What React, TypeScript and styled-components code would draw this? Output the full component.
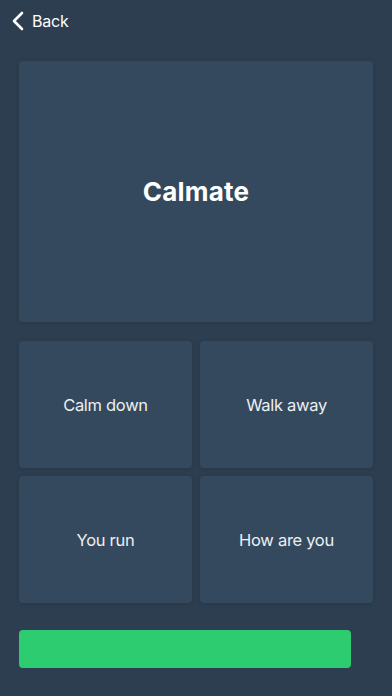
import React from 'react';
import styled, { createGlobalStyle } from 'styled-components';

const GlobalStyle = createGlobalStyle`
  html, body {
    margin: 0;
    padding: 0;
    background: #2c3e50;
  }
  body {
    font-family: Inter, "Noto Sans", "Liberation Sans", sans-serif;
    -webkit-font-smoothing: antialiased;
  }
`;

const Screen = styled.div`
  width: 392px;
  height: 696px;
  background: #2c3e50;
  display: flex;
  flex-direction: column;
  overflow: hidden;
`;

const NavBar = styled.div`
  height: 44px;
  display: flex;
  align-items: center;
  padding: 0 12px;
  box-sizing: border-box;
`;

const BackButton = styled.button`
  display: flex;
  align-items: center;
  gap: 8px;
  background: none;
  border: none;
  padding: 0;
  color: #ffffff;
  font-family: inherit;
  font-size: 16px;
  letter-spacing: -0.2px;
  cursor: pointer;
  margin-top: -2px;
`;

const Content = styled.div`
  display: flex;
  flex-direction: column;
  padding: 17px 19px 0;
`;

const Card = styled.div<{ $height: number }>`
  height: ${(p) => p.$height}px;
  background: #34495e;
  border-radius: 4px;
  box-shadow: 0 1px 4px rgba(0, 0, 0, 0.12);
  display: flex;
  align-items: center;
  justify-content: center;
  color: #ffffff;
`;

const Title = styled.span`
  font-size: 26px;
  font-weight: 700;
  letter-spacing: 0.2px;
`;

const Answers = styled.div`
  margin-top: 19px;
  display: grid;
  grid-template-columns: 1fr 1fr;
  gap: 8px;
`;

const AnswerText = styled.span`
  font-size: 16.5px;
  font-weight: 400;
  letter-spacing: -0.3px;
  color: #ecf0f1;
`;

const Track = styled.div`
  margin-top: 27px;
  height: 38px;
  display: flex;
`;

const Progress = styled.div`
  height: 100%;
  background: #2ecc71;
  border-radius: 4px;
`;

const answers = ['Calm down', 'Walk away', 'You run', 'How are you'];

const ChevronLeft = () => (
  <svg width="12" height="20" viewBox="0 0 12 20" fill="none">
    <path d="M10 2 L2 10 L10 18" stroke="#fff" strokeWidth="2.6" strokeLinecap="round" strokeLinejoin="round" />
  </svg>
);

const App: React.FC = () => {
  const progress = 332 / 354;

  return (
    <>
      <GlobalStyle />
      <Screen>
        <NavBar>
          <BackButton>
            <ChevronLeft />
            Back
          </BackButton>
        </NavBar>
        <Content>
          <Card $height={261}>
            <Title>Calmate</Title>
          </Card>
          <Answers>
            {answers.map((a) => (
              <Card key={a} $height={127}>
                <AnswerText>{a}</AnswerText>
              </Card>
            ))}
          </Answers>
          <Track>
            <Progress style={{ width: `${progress * 100}%` }} />
          </Track>
        </Content>
      </Screen>
    </>
  );
};

export default App;
